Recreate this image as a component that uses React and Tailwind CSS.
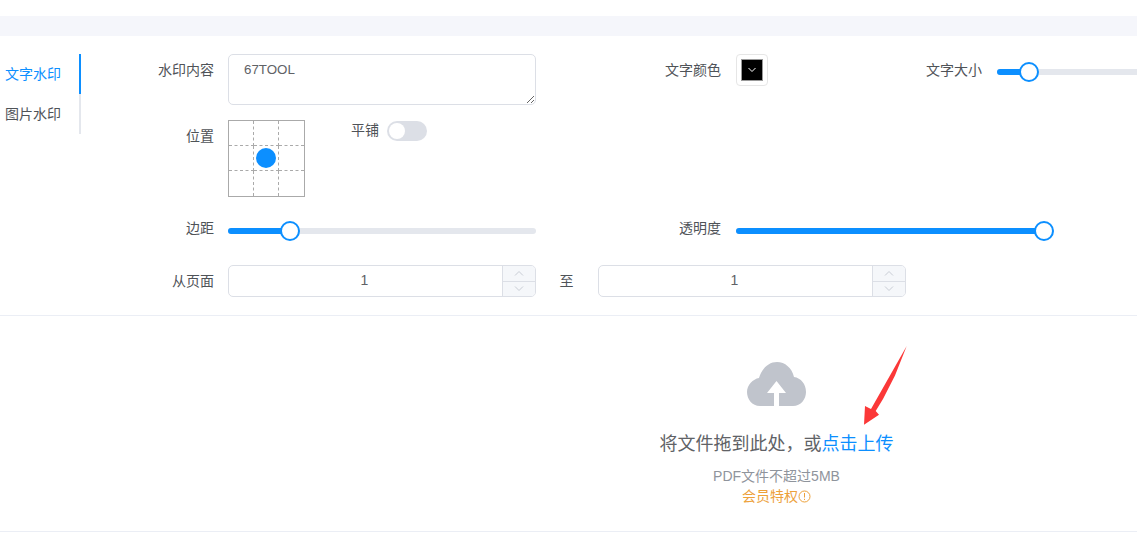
import React from "react";

const FONT = { fontFamily: '"Liberation Sans", "Noto Sans CJK SC", sans-serif' };

function Slider({ width, pct, className = "" }) {
  return (
    <div className={`relative h-[6px] shrink-0 rounded-[3px] bg-[#e4e7ed] ${className}`} style={{ width }}>
      <div className="h-full rounded-[3px] bg-[#0c8fff]" style={{ width: `${pct}px` }} />
      <div
        className="absolute top-[-7px] h-5 w-5 rounded-full border-2 border-[#0c8fff] bg-white"
        style={{ left: `${pct - 10}px` }}
      />
    </div>
  );
}

function Chevron({ up }) {
  return (
    <svg width="10" height="6" viewBox="0 0 10 6" fill="none" stroke="#c8ccd4" strokeWidth="1">
      <path d={up ? "M1 5.5 L5 1.5 L9 5.5" : "M1 .5 L5 4.5 L9 .5"} />
    </svg>
  );
}

function NumberInput() {
  return (
    <div className="flex h-8 w-[308px] shrink-0 overflow-hidden rounded-[5px] border border-[#dcdfe6] bg-white">
      <div className="flex flex-1 items-center justify-center pb-[3px] pr-[2px] text-[14px] text-[#606266]">1</div>
      <div className="flex w-[33px] flex-col border-l border-[#dcdfe6] bg-[#f5f7fa]">
        <div className="flex flex-1 items-center justify-center border-b border-[#dcdfe6]"><Chevron up /></div>
        <div className="flex flex-1 items-center justify-center"><Chevron /></div>
      </div>
    </div>
  );
}

export default function App() {
  return (
    <div className="relative h-[545px] w-[1137px] overflow-hidden bg-white text-[14px] leading-[20px] text-[#4f5358]" style={FONT}>
      <div className="mt-4 h-5 bg-[#f5f6fb]" />

      <div className="flex h-[280px] border-b border-[#ebeef5] pt-[18px]">
        <div className="h-20 w-[81px] shrink-0 border-r-2 border-[#e4e7ed]">
          <div className="-mr-[2px] flex h-10 items-center border-r-2 border-[#0c8fff] pb-[1px] pl-[5px] text-[#0c8fff]">文字水印</div>
          <div className="flex h-10 items-center pb-[1px] pl-[5px]">图片水印</div>
        </div>

        <div className="flex min-w-0 flex-1 flex-col">
          <div className="flex items-start">
            <div className="w-[133px] shrink-0 pt-[6px] text-right">水印内容</div>
            <textarea
              readOnly
              defaultValue="67TOOL"
              className="ml-[14px] block h-[51px] w-[308px] shrink-0 rounded-[5px] border border-[#dcdfe6] px-[15px] py-[5px] text-[13.33px] leading-[20px] text-[#606266] outline-none"
            />
            <div className="w-[185px] shrink-0 pt-[6px] text-right">文字颜色</div>
            <div className="ml-[15px] flex h-8 w-8 shrink-0 items-center justify-center rounded-[4px] border border-[#e6e6e6] p-[4px]">
              <div className="flex h-full w-full items-center justify-center border border-[#999] bg-black">
                <svg width="10" height="6" viewBox="0 0 10 6" fill="none" stroke="#fff" strokeWidth="1"><path d="M1.5 1 L5 4.5 L8.5 1" /></svg>
              </div>
            </div>
            <div className="w-[214px] shrink-0 pt-[6px] text-right">文字大小</div>
            <Slider width={200} pct={32} className="ml-[15px] mt-[15px]" />
          </div>

          <div className="mt-[15px] flex items-start">
            <div className="w-[133px] shrink-0 pt-[6px] text-right">位置</div>
            <div className="relative ml-[14px] grid h-[77px] w-[77px] shrink-0 grid-cols-3 grid-rows-3 border border-[#aaaaaa]">
              <div className="border-b border-r border-dashed border-[#aaaaaa]" />
              <div className="border-b border-r border-dashed border-[#aaaaaa]" />
              <div className="border-b border-dashed border-[#aaaaaa]" />
              <div className="border-b border-r border-dashed border-[#aaaaaa]" />
              <div className="border-b border-r border-dashed border-[#aaaaaa]" />
              <div className="border-b border-dashed border-[#aaaaaa]" />
              <div className="border-r border-dashed border-[#aaaaaa]" />
              <div className="border-r border-dashed border-[#aaaaaa]" />
              <div />
              <div className="absolute left-[27px] top-[27px] h-5 w-5 rounded-full bg-[#0c8fff]" />
            </div>
            <div className="ml-[46px]">平铺</div>
            <div className="ml-[8px] mt-[1px] flex h-5 w-10 shrink-0 items-center rounded-full bg-[#dcdfe6] pl-[2px]">
              <div className="h-4 w-4 rounded-full bg-white" />
            </div>
          </div>

          <div className="mt-[24px] flex h-5 items-center">
            <div className="w-[133px] shrink-0 pb-[7px] text-right">边距</div>
            <Slider width={308} pct={62} className="ml-[14px]" />
            <div className="w-[185px] shrink-0 pb-[7px] text-right">透明度</div>
            <Slider width={318} pct={308} className="ml-[15px]" />
          </div>

          <div className="mt-[24px] flex items-center">
            <div className="w-[133px] shrink-0 text-right">从页面</div>
            <div className="ml-[14px]"><NumberInput /></div>
            <div className="w-[62px] shrink-0 pr-[1px] text-center">至</div>
            <NumberInput />
          </div>
        </div>
      </div>

      <div className="flex h-[216px] flex-col items-center border-b border-[#ebeef5] pl-[416px]">
        <svg className="mt-[46px]" width="60" height="44" viewBox="0 0 60 44">
          <path
            fill="#c0c4cc"
            d="M13 44 C5 44 0 37 0 30 C0 23 6 17 12 16 C15 6 22 0 30 0 C38 0 45 6 47 15 C54 16 59 22 59 30 C59 37 54 44 46 44 L32 44 L32 31 L39 31 L29.5 19 L20 31 L27 31 L27 44 Z"
          />
        </svg>
        <div className="mt-[25px] text-[18px] leading-[26px] text-[#606266]">
          将文件拖到此处，或<span className="text-[#0c8fff]">点击上传</span>
        </div>
        <div className="mt-[10px] text-[14px] leading-[18px] text-[#8f949c]">PDF文件不超过5MB</div>
        <div className="mt-[1px] flex items-center text-[14px] leading-[20px] text-[#eda13a]">
          <span>会员特权</span>
          <svg width="13" height="13" viewBox="0 0 13 13" fill="none" stroke="#eda13a" strokeWidth="1">
            <circle cx="6.5" cy="6.5" r="5.5" />
            <path d="M6.5 3 V7.5 M6.5 8.8 V10" />
          </svg>
        </div>
      </div>

      <svg className="absolute left-[860px] top-[345px]" width="50" height="82" viewBox="860 345 50 82">
        <polygon fill="#fb3838" points="906.7,346 895,375.5 883,399 875.7,411 879,414.7 864,424.7 865,406 871,409" />
      </svg>
    </div>
  );
}
